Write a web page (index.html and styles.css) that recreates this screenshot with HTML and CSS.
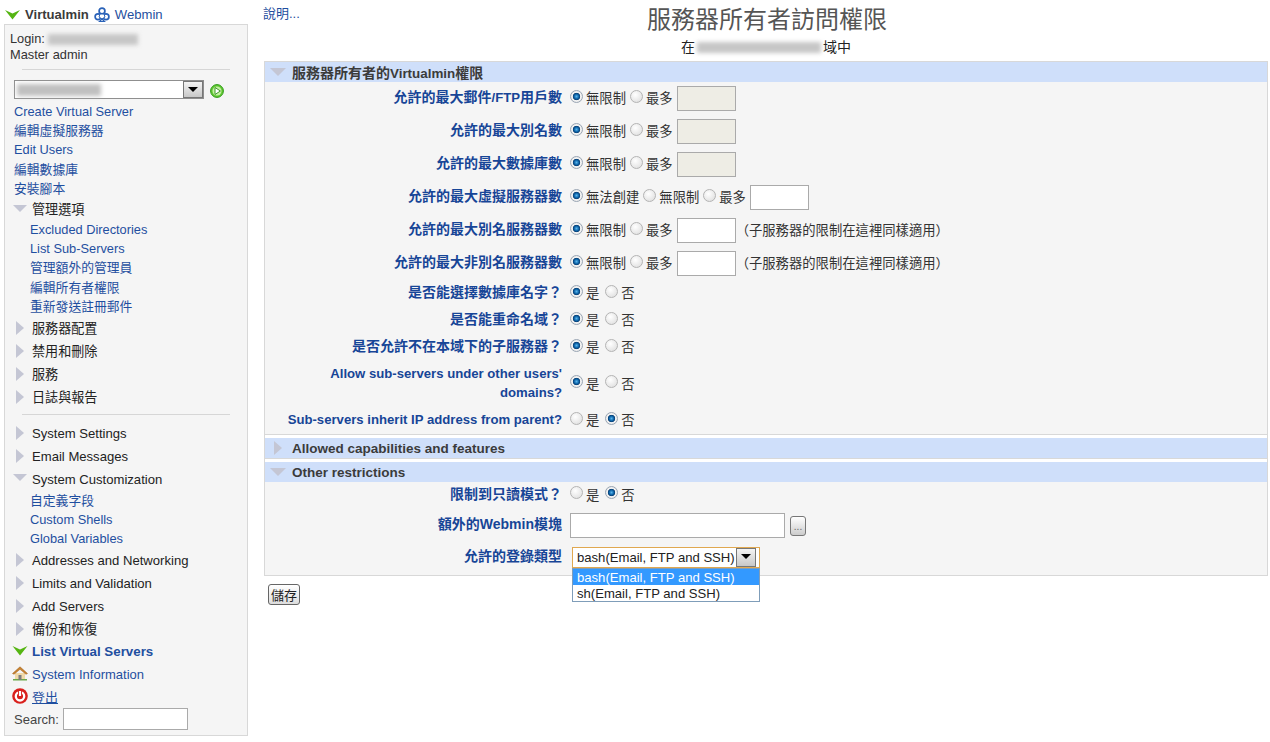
FILE: index.html
```html
<!DOCTYPE html>
<html lang="zh-Hant">
<head>
<meta charset="utf-8">
<title>服務器所有者訪問權限</title>
<link rel="stylesheet" href="styles.css">
</head>
<body>
<div class="page">
<aside class="side">
  <div class="brand">
    <svg width="15" height="10" viewBox="0 0 15 10"><path d="M0 0 7.500 3.500 15 0 7.500 9.500Z" fill="#55b512"/></svg>
    <b>Virtualmin</b>
    <svg width="16" height="16" viewBox="0 0 16 16" fill="none" stroke="#2a62b8" stroke-width="1.700"><circle cx="8" cy="4" r="2.900"/><circle cx="4" cy="9.800" r="2.900"/><circle cx="12" cy="9.800" r="2.900"/><path d="M6 7h4l1 3-3 2-3-2Z" fill="#fff" stroke-width="1"/><path d="M5.500 14.500h5L8 12Z" stroke-width="1.200"/></svg>
    <a href="#">Webmin</a>
  </div>
  <div class="panel">
    <div class="login">Login: <span class="blur w-login"></span></div>
    <div class="login">Master admin</div>
    <hr class="rule first">
    <div class="domain">
      <div class="combo"><span class="blur w-domain"></span><span class="arrow"></span></div>
      <svg width="14" height="14" viewBox="0 0 14 14"><circle cx="7" cy="7" r="6.400" fill="#62c832" stroke="#2f9a18"/><circle cx="7" cy="7" r="4.500" fill="#c4f2a4"/><path d="M5 3.500 10.400 7 5 10.500Z" fill="#fff" stroke="#2f8f18" stroke-width=".9"/></svg>
    </div>
    <a class="lnk" href="#">Create Virtual Server</a>
    <a class="lnk" href="#">編輯虛擬服務器</a>
    <a class="lnk" href="#">Edit Users</a>
    <a class="lnk" href="#">編輯數據庫</a>
    <a class="lnk" href="#">安裝腳本</a>
    <div class="sec open">管理選項</div>
    <a class="lnk sub" href="#">Excluded Directories</a>
    <a class="lnk sub" href="#">List Sub-Servers</a>
    <a class="lnk sub" href="#">管理額外的管理員</a>
    <a class="lnk sub" href="#">編輯所有者權限</a>
    <a class="lnk sub" href="#">重新發送註冊郵件</a>
    <div class="sec">服務器配置</div>
    <div class="sec">禁用和刪除</div>
    <div class="sec">服務</div>
    <div class="sec">日誌與報告</div>
    <hr class="rule second">
    <div class="sec">System Settings</div>
    <div class="sec">Email Messages</div>
    <div class="sec open custom">System Customization</div>
    <a class="lnk sub" href="#">自定義字段</a>
    <a class="lnk sub" href="#">Custom Shells</a>
    <a class="lnk sub" href="#">Global Variables</a>
    <div class="sec">Addresses and Networking</div>
    <div class="sec">Limits and Validation</div>
    <div class="sec">Add Servers</div>
    <div class="sec last">備份和恢復</div>
    <div class="item strong">
      <svg width="16" height="10" viewBox="0 0 15 10"><path d="M0 0 7.500 3.500 15 0 7.500 9.500Z" fill="#55b512"/></svg>
      <a href="#">List Virtual Servers</a>
    </div>
    <div class="item info">
      <svg width="16" height="15" viewBox="0 0 16 15"><path d="M3 7h10v7H3Z" fill="#f0d9a8"/><path d="M1 13h14v1.500H1Z" fill="#6aa84a"/><rect x="6.500" y="9" width="3" height="5" fill="#7d7d7d"/><path d="M8 .8 .5 7.500l1.500.8L8 3.300l6 5 1.500-.8Z" fill="#c9822e" stroke="#9a5c18" stroke-width=".5"/></svg>
      <a href="#">System Information</a>
    </div>
    <div class="item short">
      <svg width="16" height="16" viewBox="0 0 16 16"><circle cx="8" cy="8" r="7.800" fill="#d9201c"/><circle cx="8" cy="8.300" r="4.200" fill="none" stroke="#fff" stroke-width="2.300"/><path d="M8 2v6.500" stroke="#d9201c" stroke-width="4"/><path d="M8 3v5" stroke="#fff" stroke-width="2.200"/></svg>
      <a class="under" href="#">登出</a>
    </div>
    <div class="search">Search: <input type="text" class="search-in"></div>
  </div>
</aside>

<main class="main">
  <header class="head">
    <a class="help" href="#">說明...</a>
    <h1 class="title">服務器所有者訪問權限</h1>
    <p class="subtitle">在<span class="blur w-sub"></span>域中</p>
  </header>

  <form class="box">
    <div class="bar open zh">服務器所有者的<span class="bar-en">Virtualmin</span>權限</div>
    <div class="row h33"><label class="lab">允許的最大郵件<span class="en">/FTP</span>用戶數</label><div class="val"><input class="rd" type="radio" name="a" checked><span>無限制</span><input class="rd" type="radio" name="a"><span>最多</span><input class="num off" type="text" disabled></div></div>
    <div class="row h33"><label class="lab">允許的最大別名數</label><div class="val"><input class="rd" type="radio" name="b" checked><span>無限制</span><input class="rd" type="radio" name="b"><span>最多</span><input class="num off" type="text" disabled></div></div>
    <div class="row h33"><label class="lab">允許的最大數據庫數</label><div class="val"><input class="rd" type="radio" name="c" checked><span>無限制</span><input class="rd" type="radio" name="c"><span>最多</span><input class="num off" type="text" disabled></div></div>
    <div class="row h33"><label class="lab">允許的最大虛擬服務器數</label><div class="val"><input class="rd" type="radio" name="d" checked><span>無法創建</span><input class="rd" type="radio" name="d"><span>無限制</span><input class="rd" type="radio" name="d"><span>最多</span><input class="num" type="text"></div></div>
    <div class="row h33"><label class="lab">允許的最大別名服務器數</label><div class="val"><input class="rd" type="radio" name="e" checked><span>無限制</span><input class="rd" type="radio" name="e"><span>最多</span><input class="num" type="text"><span class="note">（子服務器的限制在這裡同樣適用）</span></div></div>
    <div class="row h33"><label class="lab">允許的最大非別名服務器數</label><div class="val"><input class="rd" type="radio" name="f" checked><span>無限制</span><input class="rd" type="radio" name="f"><span>最多</span><input class="num" type="text"><span class="note">（子服務器的限制在這裡同樣適用）</span></div></div>
    <div class="row h27"><label class="lab">是否能選擇數據庫名字？</label><div class="val yn"><input class="rd" type="radio" name="g" checked><span>是</span><input class="rd" type="radio" name="g"><span>否</span></div></div>
    <div class="row h27"><label class="lab">是否能重命名域？</label><div class="val yn"><input class="rd" type="radio" name="h" checked><span>是</span><input class="rd" type="radio" name="h"><span>否</span></div></div>
    <div class="row h27"><label class="lab">是否允許不在本域下的子服務器？</label><div class="val yn"><input class="rd" type="radio" name="i" checked><span>是</span><input class="rd" type="radio" name="i"><span>否</span></div></div>
    <div class="row h46"><label class="lab en">Allow sub-servers under other users' domains?</label><div class="val yn"><input class="rd" type="radio" name="j" checked><span>是</span><input class="rd" type="radio" name="j"><span>否</span></div></div>
    <div class="row h27"><label class="lab en">Sub-servers inherit IP address from parent?</label><div class="val yn"><input class="rd" type="radio" name="k"><span>是</span><input class="rd" type="radio" name="k" checked><span>否</span></div></div>
    <div class="split"></div>
    <div class="bar">Allowed capabilities and features</div>
    <div class="split"></div>
    <div class="bar open">Other restrictions</div>
    <div class="row h26"><label class="lab">限制到只讀模式？</label><div class="val yn"><input class="rd" type="radio" name="l"><span>是</span><input class="rd" type="radio" name="l" checked><span>否</span></div></div>
    <div class="row h35"><label class="lab">額外的<span class="en wide">Webmin</span>模塊</label><div class="val"><input class="mods" type="text"><button class="dots" type="button">...</button></div></div>
    <div class="row h28"><label class="lab">允許的登錄類型</label>
      <div class="val">
        <div class="select">
          <div class="sel-cur">bash(Email, FTP and SSH)<span class="arrow"></span></div>
          <ul class="sel-list">
            <li class="on">bash(Email, FTP and SSH)</li>
            <li>sh(Email, FTP and SSH)</li>
          </ul>
        </div>
      </div>
    </div>
  </form>
  <button class="save" type="button">儲存</button>
</main>
</div>
</body>
</html>
```
FILE: styles.css
```css
* { box-sizing: border-box; }
html, body { margin: 0; padding: 0; height: 100%; background: #fff; overflow: hidden; }
body {
  font-family: "Liberation Sans", Arial, "Noto Sans CJK TC", sans-serif;
  font-size: 12.800px;
  color: #333;
}
a { color: #1f4fa0; text-decoration: none; }
.page { display: flex; height: 742px; }

/* sidebar */
.side { width: 248px; flex: none; padding-left: 4px; margin-right: 16px; }
.brand { height: 24px; display: flex; align-items: center; padding: 5px 0 0 1px; gap: 5px; font-size: 13.100px; }
.brand b { color: #3b3b3b; }
.panel {
  background: #f5f5f5;
  border: 1px solid #d8d8d8;
  height: 712px;
  padding: 6px 0 0 5px;
  overflow: hidden;
}
.login { height: 16px; line-height: 16px; }
.rule { border: 0; border-top: 1px solid #d6d6d6; margin: 0; width: 208px; margin-left: 12px; }
.rule.first { margin-top: 6px; margin-bottom: 10px; }
.rule.second { margin-top: 6px; margin-bottom: 6px; }
.blur { display: inline-block; background: #c6c6c6; filter: blur(2px); height: 11px; vertical-align: middle; }
.w-login { width: 90px; }
.w-domain { width: 84px; height: 12px; margin-left: 2px; background: #c0c0c0; }
.w-sub { width: 124px; height: 11px; vertical-align: -1px; margin: 0 2px; }
.domain { display: flex; align-items: flex-start; gap: 6px; height: 20px; margin: 0 0 2px 4px; }
.domain svg { margin-top: 4px; }
.combo {
  width: 190px; height: 19px; background: #fff; border: 1px solid #8f8f8f;
  display: flex; align-items: center; justify-content: space-between;
}
.arrow {
  width: 20px; height: 17px; flex: none;
  background: linear-gradient(#f4f4f4, #c8c8c8);
  border: 1px solid #777;
  position: relative;
  display: block;
}
.arrow::after {
  content: ""; position: absolute; left: 4px; top: 5px;
  border: 5px solid transparent; border-top: 5px solid #000; border-bottom: 0;
}
.lnk { display: block; height: 19.200px; line-height: 19.200px; margin-left: 4px; }
.lnk.sub { margin-left: 20px; }
.sec {
  height: 23px; line-height: 23px; padding: 1px 0 0 22px; position: relative; color: #222; font-size: 13.100px;
}
.sec::before {
  content: ""; position: absolute; left: 6px; top: 5px;
  border-left: 8px solid #c4c6d4; border-top: 7px solid transparent; border-bottom: 7px solid transparent;
}
.sec.open { height: 22px; line-height: 22px; }
.sec.open::before {
  left: 3px; top: 7px; border-top: 7px solid #c4c6d4; border-left: 7px solid transparent; border-right: 7px solid transparent; border-bottom: 0;
}
.sec.custom { margin-bottom: 2px; padding-top: 2px; }
.sec.last { height: 22px; }
.item { display: flex; align-items: center; height: 23px; gap: 4px; padding-left: 2px; font-size: 13px; }
.item svg { flex: none; }
.strong a { font-weight: bold; font-size: 13.330px; }
.strong a, .info a { padding-top: 2px; }
.item.short { height: 22px; }
.under { text-decoration: underline; }
.search { display: flex; align-items: center; gap: 4px; height: 24px; margin-left: 4px; color: #444; font-size: 13px; }
.search-in { width: 125px; height: 22px; border: 1px solid #aaa; background: #fff; padding: 0; }

/* main */
.main { width: 1004px; flex: none; }
.head { height: 61px; display: grid; grid-template-columns: 1fr auto 1fr; grid-template-rows: 36px 25px; }
.help { grid-column: 1; grid-row: 1; padding-top: 6px; margin-left: -1px; font-size: 13px; line-height: 16px; }
.title { grid-column: 2; grid-row: 1; margin: 0 0 0 2px; font-size: 24px; font-weight: normal; color: #555; line-height: 40px; }
.subtitle { grid-column: 1 / 4; grid-row: 2; margin: 0; text-align: center; font-size: 14px; line-height: 23px; color: #222; }
.box { background: #f5f5f5; border: 1px solid #d8d8d8; height: 515px; }
.bar {
  height: 20px; line-height: 22px; background: #cfdffa; padding-left: 27px; font-weight: bold; color: #3b3b3b; position: relative; font-size: 13.500px;
}
.bar.zh { font-size: 14px; }
.bar-en { font-size: 13.400px; }
.bar::before {
  content: ""; position: absolute; left: 9px; top: 3px;
  border-left: 8px solid #c4c6d4; border-top: 7px solid transparent; border-bottom: 7px solid transparent;
}
.bar.open::before {
  left: 5px; top: 6px; border-top: 8px solid #c4c6d4; border-left: 8px solid transparent; border-right: 8px solid transparent; border-bottom: 0;
}
.split { height: 4px; border-top: 1px solid #d8d8d8; background: #fff; }
.row { display: flex; align-items: center; }
.h33 { height: 33px; }
.h27 { height: 27px; }
.h46 { height: 46px; }
.h26 { height: 26px; }
.h35 { height: 35px; }
.h28 { height: 28px; }
.lab { width: 297px; padding-left: 20px; flex: none; text-align: right; font-weight: bold; color: #174597; font-size: 14px; line-height: 19px; margin-top: -2px; }
.lab .en, .lab.en { font-size: 13.150px; }
.lab .en.wide { font-size: 14px; }
.val { display: flex; align-items: center; padding-left: 7px; font-size: 13.330px; }
.rd {
  appearance: none; -webkit-appearance: none; width: 13px; height: 13px; margin: -5px 3px 0 1px; border-radius: 50%;
  border: 1px solid #b4b4b4; background: radial-gradient(circle at 40% 35%, #fff, #dadada); flex: none;
}
.rd:checked {
  border-color: #9aa6b4;
  background: radial-gradient(circle at 50% 50%, #58b4ec 0, #0b62a6 30%, #0a3f74 44%, #f4f4f4 52%, #dedede 100%);
}
.val span { margin-right: 3px; padding-top: 1px; line-height: 16px; }
.val.yn span { margin-right: 5px; }
.num { width: 59px; height: 25px; border: 1px solid #aaa; background: #fff; padding: 0; margin-left: 1px; }
.num.off { background: #eeede5; }
.val .note { margin: 0; }
.mods { width: 215px; height: 25px; border: 1px solid #aaa; background: #fff; padding: 0; margin-left: 1px; }
.dots {
  width: 16px; height: 20px; margin-left: 5px; padding: 0; border: 1px solid #777; border-radius: 3px;
  background: linear-gradient(#fff, #ccc); font-size: 10px; color: #666; line-height: 20px;
}
.select { position: relative; width: 188px; margin-left: 3px; font-size: 13.100px; }
.sel-cur {
  height: 21px; border: 1px solid #e0a850; background: #fff; padding-left: 4px; line-height: 19px; color: #222;
  display: flex; justify-content: space-between; align-items: center;
}
.sel-cur .arrow { height: 19px; }
.sel-list {
  position: absolute; left: 0; top: 21px; width: 100%; margin: 0; padding: 0; list-style: none;
  background: #fff; border: 1px solid #7f9db9; z-index: 2;
}
.sel-list li { height: 16px; line-height: 18px; padding-left: 4px; color: #222; }
.sel-list li.on { background: #3399ff; color: #fff; }
.save {
  margin: 8px 0 0 4px; width: 32px; height: 21px; padding: 0; border: 1px solid #666; border-radius: 3px;
  background: linear-gradient(#fff, #ddd); font: 13px "Liberation Sans", "Noto Sans CJK TC", sans-serif; color: #222;
}
```
